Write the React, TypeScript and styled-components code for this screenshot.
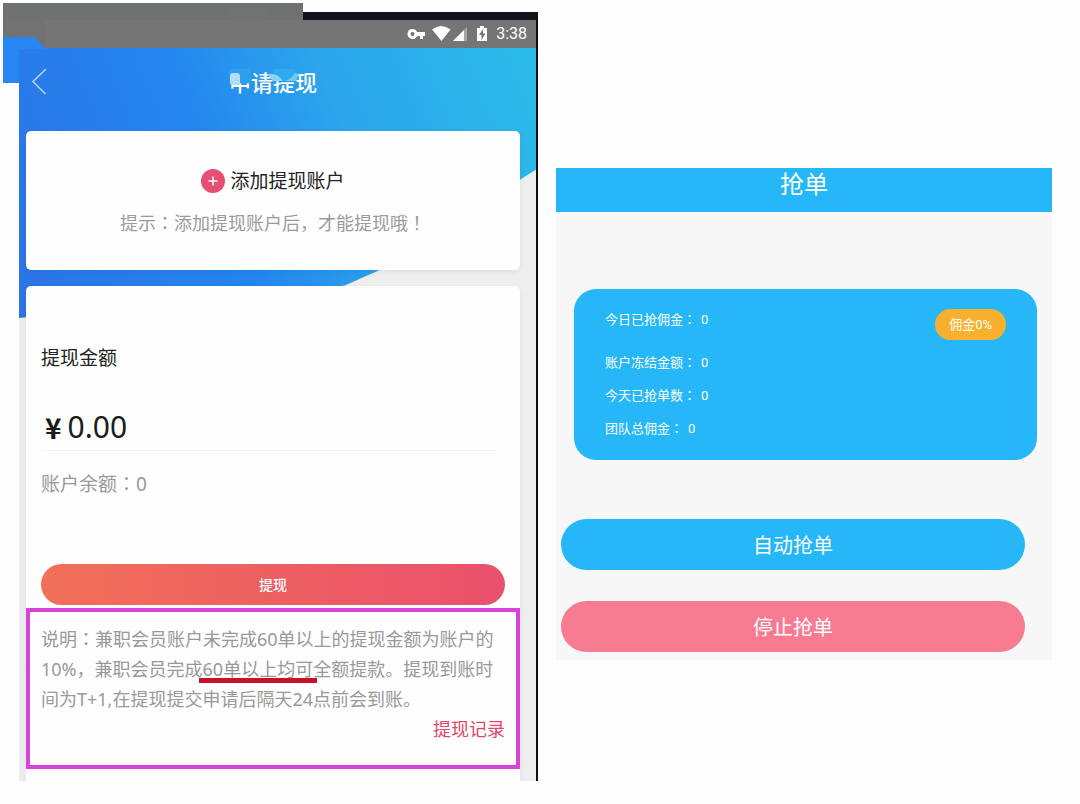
import React from 'react';
import styled, { createGlobalStyle } from 'styled-components';

const Global = createGlobalStyle`
  *, *::before, *::after { box-sizing: border-box; }
  body { margin: 0; background: #fefefe; }
  button { border: 0; margin: 0; padding: 0; font: inherit; cursor: pointer; }
  h1, h2, p, dl, dt, dd { margin: 0; font-weight: 400; }
`;

const Page = styled.main`
  display: grid;
  grid-template-columns: minmax(0, 519fr) minmax(0, 496fr);
  gap: 18px;
  align-items: start;
  padding: 12px 28px 23px 19px;
`;

const Phone = styled.section`
  position: relative;
  border-top: 8px solid #10141c;
  border-right: 2px solid #0b0f16;
  background: #eeeeef;
  font-family: 'Noto Sans', 'Noto Sans CJK SC', sans-serif;
`;

const StatusBar = styled.div`
  display: flex;
  align-items: center;
  justify-content: flex-end;
  height: 28px;
  padding-right: 9px;
  background: #757575;
  color: #fff;
  font: 16px/28px Roboto, sans-serif;
`;

const StatusIcons = styled.svg`
  width: 82px;
  height: 20px;
  margin-right: 7px;
`;

const Smudge = styled.svg`
  position: absolute;
  left: -16px;
  top: -17px;
  width: 300px;
  height: 80px;
`;

const Screen = styled.div`
  position: relative;
  overflow: hidden;
  padding: 0 16px 0 7px;
`;

const Backdrop = styled.div`
  position: absolute;
  inset: 0 0 auto 0;
  height: 270px;
  background: linear-gradient(68deg, #2c74e6 0%, #2485ee 40%, #2ca5ec 64%, #2bbce8 100%);
  clip-path: polygon(0 0, 100% 0, 100% 45%, 70% 82%, 63% 88%, 0 100%);
`;

const TitleBar = styled.header`
  position: relative;
  display: grid;
  grid-template-columns: 26px 1fr 26px;
  align-items: center;
  height: 83px;
  padding-bottom: 16px;
  color: #fff;
`;

const BackButton = styled.button`
  height: 26px;
  background: none;
  svg { display: block; width: 26px; height: 26px; }
`;

const Title = styled.h1`
  position: relative;
  justify-self: center;
  font-size: 22px;
  font-weight: 500;
  line-height: 32px;
`;

const TitleSmear = styled.svg`
  position: absolute;
  inset: 0;
  width: 100%;
  height: 100%;
`;

const Card = styled.div`
  position: relative;
  border-radius: 5px;
  background: #fefefe;
  box-shadow: 0 2px 6px rgba(0, 0, 0, 0.06);
`;

const AddCard = styled(Card)`
  display: flex;
  flex-direction: column;
  align-items: center;
  height: 139px;
  padding-top: 34px;
  margin-bottom: 16px;
`;

const AddButton = styled.button`
  display: flex;
  align-items: center;
  gap: 5px;
  background: none;
  color: #222;
  font-size: 19px;
  line-height: 32px;
  svg { width: 24px; height: 24px; }
`;

const Hint = styled.p`
  margin-top: 11px;
  color: #9b9b9b;
  font-size: 18px;
  line-height: 30px;
`;

const Mid = styled.span`
  font-family: 'Noto Sans CJK TC', sans-serif;
  line-height: 1;
`;

const WithdrawCard = styled(Card)`
  border-radius: 5px 5px 0 0;
  padding-bottom: 12px;
`;

const Amounts = styled.div`
  display: flex;
  flex-direction: column;
  padding: 56px 15px 3px;
`;

const Label = styled.h2`
  color: #222;
  font-size: 19px;
  line-height: 32px;
`;

const Amount = styled.p`
  display: flex;
  align-items: center;
  gap: 6px;
  height: 77px;
  margin-right: 8px;
  padding: 30px 0 0 4px;
  border-bottom: 1px solid #f3f3f3;
  color: #1c1c1c;
  font-size: 30px;
  line-height: 46px;
  b { font: 700 28px/46px 'Noto Sans CJK SC', sans-serif; }
`;

const Balance = styled.p`
  margin: 17px 0 64px;
  color: #999;
  font-size: 19px;
  line-height: 32px;
`;

const Withdraw = styled.button`
  height: 41px;
  border-radius: 21px;
  background: linear-gradient(90deg, #f17058, #ea506c);
  color: #fff;
  font-size: 14px;
  font-weight: 500;
  line-height: 40px;
`;

const Notice = styled.div`
  display: flex;
  flex-direction: column;
  height: 161px;
  padding: 12px 11px;
  border: 4px solid #d843da;
  color: #999;
  font-size: 18px;
  line-height: 30px;
`;

const Marked = styled.span`
  position: relative;
  &::after {
    content: '';
    position: absolute;
    inset: auto -4px -2px -4px;
    height: 5px;
    background: #c91228;
  }
`;

const Records = styled.a`
  align-self: flex-end;
  color: #e2476b;
  text-decoration: none;
`;

const Panel = styled.section`
  margin-top: 156px;
  padding-bottom: 8px;
  background: #f7f7f7;
  color: #fff;
  font-family: Roboto, 'Noto Sans CJK SC', sans-serif;
`;

const PanelTitle = styled.h1`
  height: 44px;
  background: #25b7f8;
  font-size: 24px;
  line-height: 34px;
  text-align: center;
`;

const Stats = styled.div`
  display: flex;
  justify-content: space-between;
  align-items: flex-start;
  margin: 77px 15px 59px 18px;
  padding: 20px 31px;
  border-radius: 22px;
  background: #25b7f8;
  font-size: 13px;
`;

const StatList = styled.dl`
  display: grid;
  gap: 11px;
  line-height: 22px;
`;

const Stat = styled.div<{ $spaced?: boolean }>`
  display: flex;
  gap: 5px;
  height: ${(p) => (p.$spaced ? '32px' : '22px')};
`;

const Badge = styled.span`
  padding: 0 14px;
  border-radius: 16px;
  background: #f7b12e;
  line-height: 31px;
`;

const Actions = styled.div`
  display: grid;
  gap: 31px;
  padding: 0 27px 0 5px;
`;

const Action = styled.button<{ $tone: string }>`
  height: 51px;
  border-radius: 26px;
  background: ${(p) => p.$tone};
  color: #fff;
  font-size: 20px;
`;

const stats = [
  { name: '今日已抢佣金', spaced: true },
  { name: '账户冻结金额' },
  { name: '今天已抢单数' },
  { name: '团队总佣金' },
];

export default function App() {
  return (
    <>
      <Global />
      <Page>
        <Phone>
          <StatusBar>
            <StatusIcons viewBox="0 0 82 20" fill="#fff" aria-hidden="true">
              <path fillRule="evenodd" d="M5.500 5a5 5 0 1 0 4.600 7H13v3h3v-3h2V8h-7.900A5 5 0 0 0 5.500 5Zm0 3a2 2 0 1 1 0 4 2 2 0 0 1 0-4Z" />
              <path d="M25 5.500Q34 -1.500 43.500 5.500L34.500 17Z" />
              <path d="M46 17 60 3v14Z" opacity=".35" />
              <path d="M46 17 57 6v11Z" />
              <path fillRule="evenodd" d="M73 2h4v2h3v13H70V4h3Zm3 3-4 6h2.500v5l4-6.500H76Z" />
            </StatusIcons>
            3:38
          </StatusBar>
          <Screen>
            <Backdrop />
            <TitleBar>
              <BackButton aria-label="返回">
                <svg viewBox="0 0 26 26" fill="none" stroke="#b5d6fb" strokeWidth="1.500">
                  <path d="M20 0 7 12.500 19.500 25" />
                </svg>
              </BackButton>
              <Title>
                申请提现
                <TitleSmear viewBox="0 0 88 32" preserveAspectRatio="none" aria-hidden="true">
                  <path d="M0 3h22v14.500H0Z" fill="#2c9fed" />
                  <rect x="1" y="7" width="10" height="12" rx="3" fill="#b5dcfa" />
                  <path d="M44 3h22v12H44Z" fill="#2caaec" />
                  <path d="M38 8q10-2 16 7H44Z" fill="#8fd0f5" />
                  <path d="M56 15q6-2 10-8l4 1-3 7Z" fill="#74c7f2" />
                </TitleSmear>
              </Title>
            </TitleBar>
            <AddCard>
              <AddButton>
                <svg viewBox="0 0 24 24" aria-hidden="true">
                  <circle cx="12" cy="12" r="12" fill="#e64e72" />
                  <path d="M12 7.500v9M7.500 12h9" stroke="#fff" strokeWidth="1.500" />
                </svg>
                添加提现账户
              </AddButton>
              <Hint>
                提示<Mid>：</Mid>添加提现账户后，才能提现哦<Mid>！</Mid>
              </Hint>
            </AddCard>
            <WithdrawCard>
              <Amounts>
                <Label>提现金额</Label>
                <Amount>
                  <b>¥</b>0.00
                </Amount>
                <Balance>
                  账户余额<Mid>：</Mid>0
                </Balance>
                <Withdraw>提现</Withdraw>
              </Amounts>
              <Notice>
                <p>
                  说明<Mid>：</Mid>兼职会员账户未完成60单以上的提现金额为账户的
                </p>
                <p>
                  10%，兼职会员完成<Marked>60单以上均可</Marked>全额提款。提现到账时
                </p>
                <p>间为T+1,在提现提交申请后隔天24点前会到账。</p>
                <Records href="#records">提现记录</Records>
              </Notice>
            </WithdrawCard>
          </Screen>
          <Smudge viewBox="0 0 300 80" aria-hidden="true">
            <path d="M0 0H300V17H30V32H0Z" fill="#707271" />
            <path d="M0 17H42V46L31 34H0Z" fill="#727272" />
            <path d="M0 34H31L43 46H16V80H0Z" fill="#2786f3" />
            <path d="M225 2h40v15h-40Z" fill="#6b7a70" opacity=".4" />
          </Smudge>
        </Phone>
        <Panel>
          <PanelTitle>抢单</PanelTitle>
          <Stats>
            <StatList>
              {stats.map((s) => (
                <Stat key={s.name} $spaced={s.spaced}>
                  <dt>
                    {s.name}
                    <Mid>：</Mid>
                  </dt>
                  <dd>0</dd>
                </Stat>
              ))}
            </StatList>
            <Badge>佣金0%</Badge>
          </Stats>
          <Actions>
            <Action $tone="#25b7f8">自动抢单</Action>
            <Action $tone="#f87c91">停止抢单</Action>
          </Actions>
        </Panel>
      </Page>
    </>
  );
}
